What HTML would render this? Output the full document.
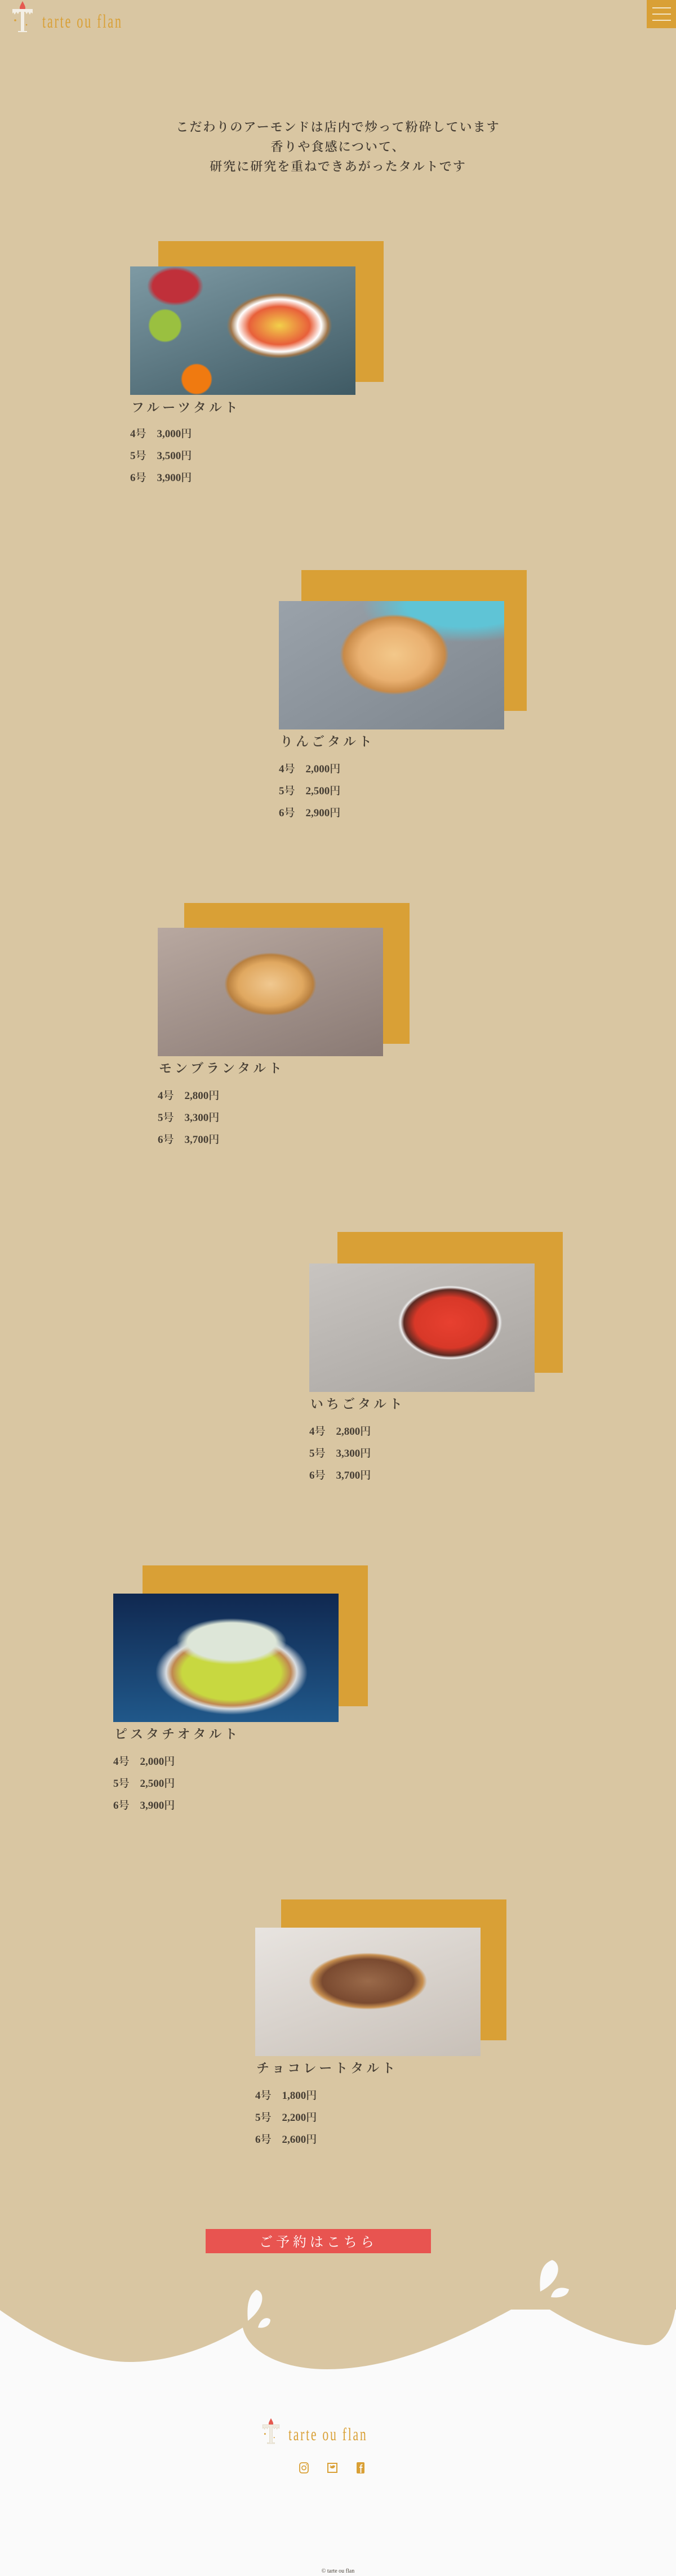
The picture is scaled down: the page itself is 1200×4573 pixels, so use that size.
<!DOCTYPE html>
<html lang="ja"><head><meta charset="utf-8">
<style>
*{margin:0;padding:0;box-sizing:border-box}
body{width:1200px;height:4573px;background:#fafafa;position:relative;overflow:hidden;font-family:"Liberation Serif","Noto Serif CJK SC",serif;color:#463e34}
.bg{position:absolute;left:0;top:0;width:1200px;height:4100px;background:#d9c6a2}
.abs{position:absolute}
.or{position:absolute;width:400px;height:250px;background:#d9a036}
.img{position:absolute;width:400px;height:228px;overflow:hidden}
.ttl{position:absolute;font-size:23px;letter-spacing:5px;line-height:30px;white-space:nowrap;font-weight:600}
.pr{position:absolute;font-size:19px;line-height:39px;white-space:nowrap;font-weight:600}
.intro{position:absolute;left:0;top:208px;width:1200px;text-align:center;font-size:22px;letter-spacing:2px;line-height:35px;font-weight:600}
.brand{position:absolute;font-family:"Liberation Serif",serif;color:#d9a036;font-size:34px;letter-spacing:4px;transform:scaleX(.66);transform-origin:left top;white-space:nowrap}
</style></head><body>
<div class="bg"></div>

<svg class="abs" style="left:18px;top:0" width="44" height="58" viewBox="0 0 44 58">
<path d="M22 2 C19 8 17 11 17 14 C17 17 19 19 22 19 C25 19 27 17 27 14 C27 11 25 8 22 2Z" fill="#e55a50"/>
<path d="M4 16 H40 V24 L37 22 L35 26 L32 21 L29 25 L27 21 H25 V55 H30 V57 H14 V55 H19 V21 H16 L14 25 L11 21 L8 26 L6 22 L4 24Z" fill="#f3efe6"/>
<circle cx="9" cy="36" r="1.8" fill="#d9a036"/><circle cx="29" cy="44" r="1.3" fill="#d9a036"/>
</svg>
<div class="brand" style="left:75px;top:20px">tarte ou flan</div>
<div class="abs" style="left:1148px;top:0;width:52px;height:50px;background:#d9a036">
<div class="abs" style="left:10px;top:13px;width:33px;height:2px;background:#f3e6c8"></div>
<div class="abs" style="left:10px;top:24px;width:33px;height:2px;background:#f3e6c8"></div>
<div class="abs" style="left:10px;top:35px;width:33px;height:2px;background:#f3e6c8"></div>
</div>

<div class="intro">こだわりのアーモンドは店内で炒って粉砕しています<br>香りや食感について、<br>研究に研究を重ねできあがったタルトです</div>

<div class="or" style="left:281px;top:428px"></div>
<div class="img" style="left:231px;top:473px;background:radial-gradient(ellipse 120px 75px at 265px 105px,#f2d04a 0,#e8603a 45%,#fff 62%,#a0764a 72%,transparent 78%),radial-gradient(circle 28px at 118px 200px,#f07a10 90%,transparent 100%),radial-gradient(circle 30px at 62px 105px,#9ac040 90%,transparent 100%),radial-gradient(ellipse 50px 35px at 80px 35px,#c0303a 80%,transparent 100%),linear-gradient(160deg,#7e9aa4,#3f5a64)"></div>
<div class="ttl" style="left:233px;top:709px">フルーツタルト</div>
<div class="pr" style="left:231px;top:751px">4号　3,000円<br>5号　3,500円<br>6号　3,900円</div>

<div class="or" style="left:535px;top:1012px"></div>
<div class="img" style="left:495px;top:1067px;background:radial-gradient(ellipse 115px 85px at 205px 95px,#f3c88a 0,#e9b070 55%,#c88a48 78%,transparent 84%),radial-gradient(ellipse 260px 90px at 330px 10px,#5fc4d6 40%,transparent 70%),linear-gradient(150deg,#9aa2aa,#7e868e)"></div>
<div class="ttl" style="left:497px;top:1302px">りんごタルト</div>
<div class="pr" style="left:495px;top:1346px">4号　2,000円<br>5号　2,500円<br>6号　2,900円</div>

<div class="or" style="left:327px;top:1603px"></div>
<div class="img" style="left:280px;top:1647px;background:radial-gradient(ellipse 95px 65px at 200px 100px,#f0c890 0,#e0a860 60%,#b88040 80%,transparent 86%),linear-gradient(160deg,#b8a8a0,#8a7a74)"></div>
<div class="ttl" style="left:282px;top:1882px">モンブランタルト</div>
<div class="pr" style="left:280px;top:1926px">4号　2,800円<br>5号　3,300円<br>6号　3,700円</div>

<div class="or" style="left:599px;top:2187px"></div>
<div class="img" style="left:549px;top:2243px;background:radial-gradient(ellipse 105px 75px at 250px 105px,#e84030 0,#d83828 60%,#5a2a22 78%,#eee 84%,transparent 88%),linear-gradient(160deg,#c8c4c0,#a8a4a0)"></div>
<div class="ttl" style="left:551px;top:2478px">いちごタルト</div>
<div class="pr" style="left:549px;top:2522px">4号　2,800円<br>5号　3,300円<br>6号　3,700円</div>

<div class="or" style="left:253px;top:2779px"></div>
<div class="img" style="left:201px;top:2829px;background:radial-gradient(ellipse 130px 55px at 210px 85px,#dde6d8 60%,transparent 75%),radial-gradient(ellipse 135px 75px at 210px 140px,#c8d840 65%,#c08850 78%,#d8dce0 86%,transparent 100%),linear-gradient(180deg,#102850,#20588a)"></div>
<div class="ttl" style="left:203px;top:3064px">ピスタチオタルト</div>
<div class="pr" style="left:201px;top:3108px">4号　2,000円<br>5号　2,500円<br>6号　3,900円</div>

<div class="or" style="left:499px;top:3372px"></div>
<div class="img" style="left:453px;top:3422px;background:radial-gradient(ellipse 125px 60px at 200px 95px,#9a6a4a 0,#7a4a30 65%,#c89050 78%,transparent 84%),linear-gradient(160deg,#e8e4e0,#c8c0b8)"></div>
<div class="ttl" style="left:455px;top:3657px">チョコレートタルト</div>
<div class="pr" style="left:453px;top:3701px">4号　1,800円<br>5号　2,200円<br>6号　2,600円</div>

<div class="abs" style="left:365px;top:3957px;width:400px;height:49px;background:#e85450;color:#fff;text-align:center;font-size:24px;letter-spacing:6px;line-height:49px">ご予約はこちら</div>

<svg class="abs" style="left:0;top:4000px" width="1200" height="220" viewBox="0 4000 1200 220">
<path d="M0 4000 H1200 V4089 C1195 4140 1175 4165 1144 4163 C1080 4158 1000 4120 945 4079 C820 4150 700 4206 581 4206 C500 4206 440 4175 431 4132 C360 4175 290 4193 230 4193 C150 4193 70 4150 0 4101Z" fill="#d9c6a2"/>
<path d="M440 4120 C438 4095 440 4075 455 4065 C470 4068 472 4095 440 4120Z" fill="#fafafa"/>
<path d="M458 4132 C462 4115 475 4112 480 4118 C480 4128 470 4134 458 4132Z" fill="#fafafa"/>
<path d="M959 4068 C957 4040 960 4020 980 4012 C998 4018 995 4050 959 4068Z" fill="#fafafa"/>
<path d="M978 4078 C982 4062 995 4058 1010 4064 C1008 4076 995 4080 978 4078Z" fill="#fafafa"/>
</svg>

<svg class="abs" style="left:463px;top:4290px" width="36" height="50" viewBox="0 0 44 58">
<path d="M22 2 C19 8 17 11 17 14 C17 17 19 19 22 19 C25 19 27 17 27 14 C27 11 25 8 22 2Z" fill="#e55a50"/>
<path d="M4 16 H40 V24 L37 22 L35 26 L32 21 L29 25 L27 21 H25 V55 H30 V57 H14 V55 H19 V21 H16 L14 25 L11 21 L8 26 L6 22 L4 24Z" fill="#f0ece2" stroke="#e0d8c4" stroke-width="1"/>
<circle cx="9" cy="36" r="1.8" fill="#d9a036"/><circle cx="29" cy="44" r="1.3" fill="#d9a036"/>
</svg>
<div class="brand" style="left:512px;top:4303px;font-size:32px;transform:scaleX(.68)">tarte ou flan</div>
<svg class="abs" style="left:529px;top:4370px" width="22" height="22" viewBox="0 0 22 22"><rect x="3" y="2" width="15" height="18" rx="4" fill="none" stroke="#d9a036" stroke-width="1.8"/><circle cx="10.5" cy="11" r="3.6" fill="none" stroke="#d9a036" stroke-width="1.6"/><circle cx="15" cy="5.5" r="1" fill="#d9a036"/></svg>
<svg class="abs" style="left:579px;top:4370px" width="22" height="22" viewBox="0 0 22 22"><rect x="3" y="3" width="16" height="16" fill="none" stroke="#d9a036" stroke-width="2"/><path d="M6 9 C8 12 11 13 14 11 C15 10 16 8 16 7 L14 7 C13 6 11 6 11 8 C9 8 8 7 7 6 C7 8 8 9 9 9Z" fill="#d9a036"/></svg>
<svg class="abs" style="left:629px;top:4370px" width="22" height="22" viewBox="0 0 22 22"><rect x="4" y="1" width="14" height="20" rx="2" fill="#d9a036"/><path d="M12.5 20 V11 H14.5 V9 H12.5 V7.5 C12.5 6.5 13 6.3 14.5 6.3 V4.5 C11.5 4.3 10.5 5.5 10.5 7.5 V9 H9 V11 H10.5 V20Z" fill="#fafafa"/></svg>
<div class="abs" style="left:0;top:4559px;width:1200px;text-align:center;font-size:10px;color:#4a4238">© tarte ou flan</div>
</body></html>
